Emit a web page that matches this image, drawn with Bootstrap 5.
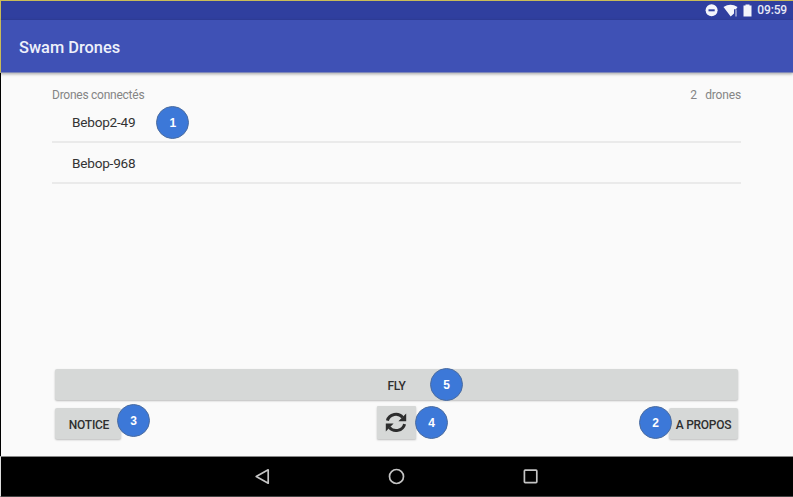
<!DOCTYPE html>
<html lang="fr">
<head>
<meta charset="utf-8">
<meta name="viewport" content="width=device-width, initial-scale=1">
<title>Swam Drones</title>
<link href="https://cdn.jsdelivr.net/npm/bootstrap@5.3.0/dist/css/bootstrap.min.css" rel="stylesheet">
<style>
body{font-family:Roboto,"Liberation Sans",sans-serif;background:#fafafa;overflow:hidden}
.screen{height:497px;border-left:1px solid #000}
.status-strip{height:20px;background:#303f9f;border-top:1px solid #c9bb58;margin-left:-1px;border-left:1px solid #c9bb58;padding-right:6px;color:#e8eaf6;font-size:12px;letter-spacing:-.15px;font-weight:500}
.status-strip span{line-height:17px;padding-bottom:1px}
.app-bar{height:53px;background:#3f51b5;margin-left:-1px;border-left:1px solid #c9bb58;border-bottom:1px solid #7e87b8;box-shadow:0 1px 3px rgba(0,0,0,.35);padding:4px 0 0 18px;color:#eef0fa;font-size:16.4px;font-weight:500}
.content-area{padding:15px 52px 0 51px}
.caption-row{height:14px;font-size:12px;line-height:14px;letter-spacing:-.25px;color:#858585}
.count-unit{margin-left:8.5px;letter-spacing:-.15px}
.drone-item{height:41px;padding:2px 0 0 20px;border-bottom:2px solid #eaeaea;font-size:13.6px;letter-spacing:-.22px;color:#333}
.drone-item .label-dot{margin-left:21px}
.label-dot{width:33px;height:33px;border-radius:50%;background:#3c78d8;border:1px solid #4b6c9f;color:#fff;font:bold 12px "Liberation Sans",sans-serif;letter-spacing:0;flex:none}
.actions{padding:0 55px 17px 54px}
.key{height:31px;background:#d6d8d7;border:0;border-radius:2px;box-shadow:0 1px 2px rgba(0,0,0,.25);color:#2f2f2f;font-size:12px;letter-spacing:-.25px;font-weight:500;line-height:1;padding:2px 0 0}
.over-dot{position:absolute}
.dot5{left:375px;top:-1px}
.dot3{left:62px;top:-4px}
.dot2{right:66px;top:-2px}
.dot4{left:360px;top:-2px}
.notice-key{width:66px;padding-left:2px}
.about-key{width:69px}
.sync-key{width:39px;height:33px;border-radius:1px;margin-top:-2px;margin-left:2px;padding:0}
.nav-strip{height:41px;background:#000;border-top:1px solid #888;border-bottom:1px solid #444;margin-left:-1px;border-left:1px solid #ddd;padding-right:2px}
.nav-strip svg{margin:0 58.5px}
</style>
</head>
<body>
<div class="screen d-flex flex-column">
  <div class="status-strip d-flex align-items-center justify-content-end flex-none">
    <svg width="48" height="14" viewBox="0 0 48 14" fill="#f4f5fc" class="me-1">
      <circle cx="6.6" cy="6.3" r="6"/><path d="M3.5 5.3h6.2v2H3.5z" fill="#303f9f"/>
      <path d="M18.5 3Q25.5-1.3 32.5 3L31 5.2h-2V9.6l-3.3 3z"/><path d="M30.2 5.6h1.6v7h-1.6z" opacity=".55"/>
      <path d="M38.5 1.6h2V.4h4v1.2h2v11h-8z"/>
    </svg>
    <span>09:59</span>
  </div>
  <header class="app-bar d-flex align-items-center">Swam Drones</header>
  <main class="content-area flex-grow-1">
    <div class="caption-row d-flex justify-content-between"><span>Drones connectés</span><span>2<span class="count-unit">drones</span></span></div>
    <div class="drone-item d-flex align-items-center">Bebop2-49<span class="label-dot d-flex align-items-center justify-content-center">1</span></div>
    <div class="drone-item d-flex align-items-center">Bebop-968</div>
  </main>
  <div class="actions d-grid">
    <div class="position-relative mb-2">
      <button class="key d-block w-100">FLY</button>
      <span class="label-dot over-dot dot5 d-flex align-items-center justify-content-center">5</span>
    </div>
    <div class="position-relative d-flex justify-content-between align-items-start">
      <button class="key notice-key">NOTICE</button>
      <button class="key sync-key d-flex align-items-center justify-content-center" aria-label="Actualiser">
        <svg width="22" height="22" viewBox="0 0 22 22" fill="none" stroke="#2d2d2d" stroke-width="3"><path d="M2.4 8.6C4.2 1.6 13.5.2 17.6 5.4M19.6 12.2C17.8 19.2 8.5 20.6 4.4 15.4"/><path d="M21.2 1.4v7.8h-7.8zM.8 19.4v-7.8h7.8z" fill="#2d2d2d" stroke="none"/></svg>
      </button>
      <button class="key about-key">A PROPOS</button>
      <span class="label-dot over-dot dot3 d-flex align-items-center justify-content-center">3</span>
      <span class="label-dot over-dot dot4 d-flex align-items-center justify-content-center">4</span>
      <span class="label-dot over-dot dot2 d-flex align-items-center justify-content-center">2</span>
    </div>
  </div>
  <nav class="nav-strip d-flex align-items-center justify-content-center">
    <svg width="17" height="17" viewBox="0 0 17 17" fill="none" stroke="#c4c4c4" stroke-width="1.7" stroke-linejoin="round"><path d="M14.2 1.8v13.4L2.2 8.5z"/></svg>
    <svg width="17" height="17" viewBox="0 0 17 17" fill="none" stroke="#c4c4c4" stroke-width="1.7"><circle cx="8.5" cy="8.5" r="7"/></svg>
    <svg width="17" height="17" viewBox="0 0 17 17" fill="none" stroke="#c4c4c4" stroke-width="1.7"><rect x="2.4" y="2.2" width="12.4" height="12.4" rx=".8"/></svg>
  </nav>
</div>
<script src="https://cdn.jsdelivr.net/npm/bootstrap@5.3.0/dist/js/bootstrap.bundle.min.js"></script>
</body>
</html>
